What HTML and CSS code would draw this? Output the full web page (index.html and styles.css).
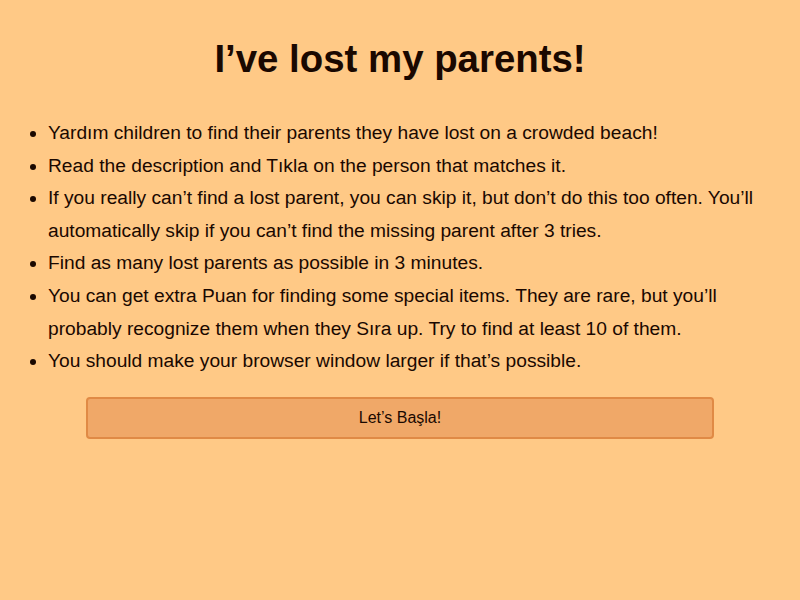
FILE: index.html
```html
<!DOCTYPE html>
<html>
<head>
<meta charset="utf-8">
<link rel="stylesheet" href="styles.css">
</head>
<body>
<div class="page">
  <h1 class="title">I’ve lost my parents!</h1>
  <ul class="rules">
    <li>Yardım children to find their parents they have lost on a crowded beach!</li>
    <li>Read the description and Tıkla on the person that matches it.</li>
    <li>If you really can’t find a lost parent, you can skip it, but don’t do this too often. You’ll automatically skip if you can’t find the missing parent after 3 tries.</li>
    <li>Find as many lost parents as possible in 3 minutes.</li>
    <li>You can get extra Puan for finding some special items. They are rare, but you’ll probably recognize them when they Sıra up. Try to find at least 10 of them.</li>
    <li>You should make your browser window larger if that’s possible.</li>
  </ul>
  <div class="actions">
    <button class="start">Let’s Başla!</button>
  </div>
</div>
</body>
</html>
```

FILE: styles.css
```css
html, body {
  margin: 0;
  padding: 0;
  background: #ffc986;
}
body {
  font-family: "Liberation Sans", Arial, sans-serif;
  color: #1a0800;
}
.page {
  padding: 36px 8px 0 8px;
}
.title {
  margin: 0;
  font-size: 38.4px;
  font-weight: bold;
  text-align: center;
  line-height: 46px;
}
.rules {
  margin: 35px 0 0 0;
  padding-left: 40px;
  font-size: 19.2px;
  line-height: 32.6px;
}
.actions {
  display: flex;
  justify-content: center;
  margin-top: 19px;
}
.start {
  width: 628px;
  height: 42px;
  background: #f0a868;
  border: 2px solid #e08a45;
  border-radius: 4px;
  font-family: "Liberation Sans", Arial, sans-serif;
  font-size: 16px;
  color: #1a0800;
  padding: 0;
}
```
